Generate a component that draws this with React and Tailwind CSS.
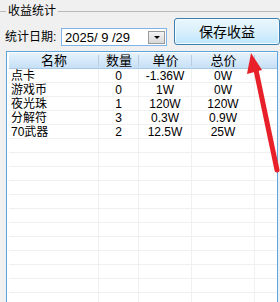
import React from "react";

const rows = [
  { name: "点卡", qty: "0", price: "-1.36W", total: "0W" },
  { name: "游戏币", qty: "0", price: "1W", total: "0W" },
  { name: "夜光珠", qty: "1", price: "120W", total: "120W" },
  { name: "分解符", qty: "3", price: "0.3W", total: "0.9W" },
  { name: "70武器", qty: "2", price: "12.5W", total: "25W" },
];

const font = { fontFamily: '"Liberation Sans", "Noto Sans CJK SC", sans-serif' };

const Cell = ({ w, children, left, last }) => (
  <div
    className={`h-full flex items-center shrink-0 ${
      last ? "" : "border-r border-[#f0f0f0]"
    } ${left ? "justify-start pl-[2px]" : "justify-center"} ${w}`}
  >
    {children}
  </div>
);

const HeadCell = ({ w, children, last }) => (
  <div className={`h-full flex items-center justify-center shrink-0 relative ${w}`}>
    {children}
    {!last && (
      <div className="absolute right-0 top-[2px] bottom-[2px] w-px bg-[#b6cde2]" />
    )}
  </div>
);

const App = () => {
  const empty = Array.from({ length: 13 });

  return (
    <div
      className="w-[280px] h-[302px] bg-[#f0f0f0] relative overflow-hidden text-[12px] text-black"
      style={font}
    >
      {/* group title */}
      <div className="flex items-center h-[22px]">
        <div className="w-[6px] h-px bg-[#b9b9b9]" />
        <span className="px-[2px] text-[12px] leading-none whitespace-nowrap">收益统计</span>
        <div className="flex-1 h-px bg-[#b9b9b9]" />
      </div>

      {/* controls */}
      <div className="flex items-start mt-[-4px] h-[27px]">
        <div className="flex items-center mt-[10px] ml-[5px] shrink-0">
          <span className="text-[12px] leading-none whitespace-nowrap w-[54px] shrink-0">统计日期:</span>
          <div className="ml-[2px] w-[106px] shrink-0 h-[18px] border border-[#7eb4ea] bg-white flex items-center">
            <span className="pl-[3px] text-[13px] leading-none flex-1 whitespace-nowrap">2025/ 9 /29</span>
            <div className="w-[17px] h-[13px] mr-[1px] border border-[#9a9a9a] bg-gradient-to-b from-[#f4f4f4] to-[#d8d8d8] flex items-center justify-center">
              <div className="w-0 h-0 border-l-[3px] border-r-[3px] border-t-[3px] border-l-transparent border-r-transparent border-t-black" />
            </div>
          </div>
        </div>
        <button className="ml-[7px] w-[106px] shrink-0 h-[27px] rounded-[3px] border border-[#3c7fb1] bg-gradient-to-b from-[#eaf6fd] via-[#d9f0fc] to-[#bee6fd] flex items-center justify-center text-[14px] leading-none shadow-[inset_0_0_0_1px_#f4fbff] whitespace-nowrap">
          保存收益
        </button>
      </div>

      {/* list */}
      <div className="ml-[6px] mt-[6px] w-[272px] h-[260px] border border-[#5ba4dc] bg-white pt-[1px] pl-[2px]">
        <div className="flex h-[16px] bg-gradient-to-b from-[#e6f2fc] to-[#c6e0f6] border-b border-[#a9c9e6] text-[13px] leading-none">
          <HeadCell w="w-[90px]">名称</HeadCell>
          <HeadCell w="w-[40px]">数量</HeadCell>
          <HeadCell w="w-[53px]">单价</HeadCell>
          <HeadCell w="w-[63px]">总价</HeadCell>
          <HeadCell w="flex-1" last />
        </div>
        {rows.map((r) => (
          <div key={r.name} className="flex h-[14px] border-b border-[#f0f0f0] leading-none">
            <Cell w="w-[90px]" left>{r.name}</Cell>
            <Cell w="w-[40px]">{r.qty}</Cell>
            <Cell w="w-[53px]">{r.price}</Cell>
            <Cell w="w-[63px]">{r.total}</Cell>
            <Cell w="flex-1" last />
          </div>
        ))}
        {empty.map((_, i) => (
          <div key={i} className="flex h-[14px] border-b border-[#f0f0f0]">
            <Cell w="w-[90px]" />
            <Cell w="w-[40px]" />
            <Cell w="w-[53px]" />
            <Cell w="w-[63px]" />
            <Cell w="flex-1" last />
          </div>
        ))}
      </div>

      {/* red arrow overlay */}
      <svg className="absolute left-0 top-0 pointer-events-none" width="280" height="302">
        <line x1="277" y1="170" x2="256" y2="70" stroke="#e8202a" strokeWidth="5" strokeLinecap="round" />
        <polygon points="251,53 262,70 247,74" fill="#e8202a" />
      </svg>
    </div>
  );
};

export default App;
